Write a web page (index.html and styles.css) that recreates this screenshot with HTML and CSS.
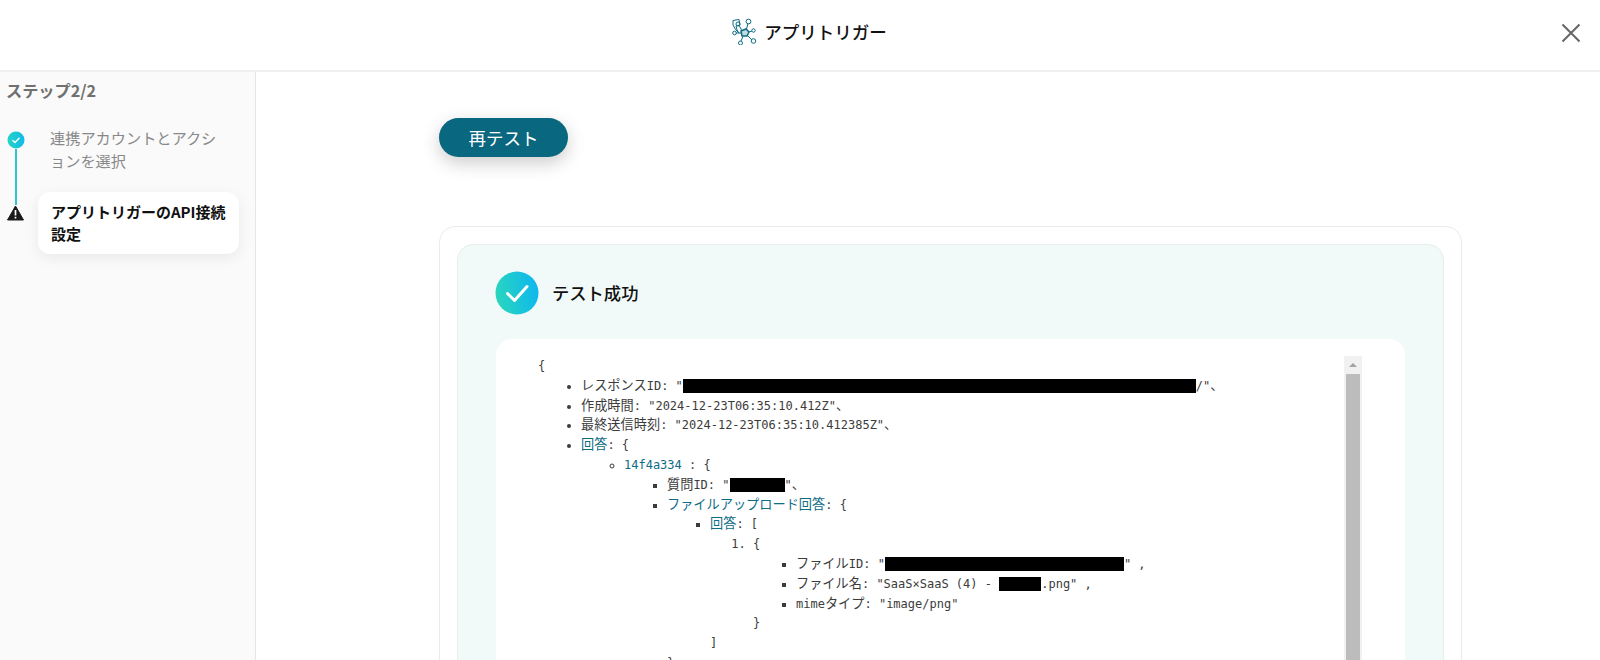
FILE: index.html
```html
<!DOCTYPE html>
<html lang="ja">
<head>
<meta charset="utf-8">
<title>アプリトリガー</title>
<link rel="stylesheet" href="styles.css">
</head>
<body>
<header class="topbar">
  <div class="title">
    <svg class="app-icon" width="26" height="28" viewBox="0 0 26 28" fill="none" stroke="#0f6c85" stroke-width="1">
      <path d="M2 3.5 L8 2.5 L9 8 L5 9 L6 13 L8 16 L4.5 12.5 L2 8Z"/>
      <path d="M10 14 L15 12 L18 15 L16 19 L11 19Z" fill="#0f6c85" fill-opacity=".25" stroke-width="1.5"/>
      <path d="M8 8 L11 14 M15.5 12 L17 6.5 M18 15 L21 14 M16.5 18.5 L21 23 M12 19.5 L10 24 M10.5 16 L5 16"/>
      <circle cx="7" cy="7" r="2"/>
      <circle cx="17.5" cy="4.5" r="2.4"/>
      <circle cx="22.5" cy="13.5" r="1.7"/>
      <circle cx="22.5" cy="24" r="2.3"/>
      <circle cx="9.5" cy="26" r="2"/>
      <circle cx="3.5" cy="16" r="1.8"/>
    </svg>
    <span>アプリトリガー</span>
  </div>
  <svg class="close" width="20" height="20" viewBox="0 0 20 20" stroke="#666" stroke-width="2" fill="none">
    <path d="M1.5 1.5 L18.5 18.5 M18.5 1.5 L1.5 18.5"/>
  </svg>
</header>
<div class="layout">
  <aside class="sidebar">
    <h2 class="step-title">ステップ2/2</h2>
    <ol class="steps">
      <li class="step step-done">
        <span class="step-mark">
          <svg class="done-icon" width="18" height="18" viewBox="0 0 18 18">
            <defs><linearGradient id="g1" x1="0" y1="0" x2="1" y2="0"><stop offset="0" stop-color="#27d3c3"/><stop offset="1" stop-color="#10bbe8"/></linearGradient></defs>
            <circle cx="9" cy="9" r="8.5" fill="url(#g1)"/>
            <path d="M5.5 9.2 L8 11.6 L12.5 6.8" fill="none" stroke="#fff" stroke-width="1.4"/>
          </svg>
          <span class="connector"></span>
        </span>
        <p class="step-text">連携アカウントとアクションを選択</p>
      </li>
      <li class="step step-current">
        <span class="step-mark">
          <svg width="17" height="16" viewBox="0 0 17 16">
            <path d="M8.5 1 L16.5 15 L0.5 15Z" fill="#1a1a1a" stroke="#1a1a1a" stroke-linejoin="round"/>
            <path d="M8.5 5 V10.5 M8.5 11.8 V13.4" stroke="#fff" stroke-width="1.7"/>
          </svg>
        </span>
        <p class="step-card">アプリトリガーのAPI接続設定</p>
      </li>
    </ol>
  </aside>
  <main class="main">
    <button class="retest" type="button">再テスト</button>
    <section class="outer-card">
      <div class="result">
        <div class="result-head">
          <svg width="44" height="44" viewBox="0 0 44 44">
            <defs><linearGradient id="g2" x1="0" y1="0.6" x2="1" y2="0.4"><stop offset="0" stop-color="#2ad6bd"/><stop offset="1" stop-color="#0db7ef"/></linearGradient></defs>
            <circle cx="22" cy="22" r="21.5" fill="url(#g2)"/>
            <path d="M12.5 22.5 L19.5 29.5 L32 15.5" fill="none" stroke="#fff" stroke-width="3" stroke-linecap="round" stroke-linejoin="round"/>
          </svg>
          <h3 class="result-title">テスト成功</h3>
        </div>
        <div class="json-box">
          <div class="fake-scroll"><span class="scroll-up"></span><span class="scroll-thumb"></span></div>
          <div class="json">
            <div>{</div>
            <ul>
              <li><span class="ja">レスポンス</span>ID: "<span class="mask m1"></span>/"<span class="ja">、</span></li>
              <li><span class="ja">作成時間</span>: "2024-12-23T06:35:10.412Z"<span class="ja">、</span></li>
              <li><span class="ja">最終送信時刻</span>: "2024-12-23T06:35:10.412385Z"<span class="ja">、</span></li>
              <li><span class="ja key">回答</span>: {
                <ul>
                  <li><span class="key">14f4a334</span> : {
                    <ul>
                      <li><span class="ja">質問</span>ID: "<span class="mask m2"></span>"<span class="ja">、</span></li>
                      <li><span class="ja key">ファイルアップロード回答</span>: {
                        <ul>
                          <li><span class="ja key">回答</span>: [
                            <ol>
                              <li>{
                                <ul>
                                  <li><span class="ja">ファイル</span>ID: "<span class="mask m3"></span>" ,</li>
                                  <li><span class="ja">ファイル名</span>: "SaaS×SaaS (4) - <span class="mask m4"></span>.png" ,</li>
                                  <li>mime<span class="ja">タイプ</span>: "image/png"</li>
                                </ul>
                                }
                              </li>
                            </ol>
                            ]
                          </li>
                        </ul>
                        }
                      </li>
                    </ul>
                    }
                  </li>
                </ul>
                }
              </li>
            </ul>
            <div>}</div>
          </div>
        </div>
      </div>
    </section>
  </main>
</div>
</body>
</html>
```
FILE: styles.css
```css
* { box-sizing: border-box; }
html, body { margin: 0; height: 660px; overflow: hidden; background: #fff; }
body { font-family: "Noto Sans CJK JP", "Noto Sans", sans-serif; color: #111; }

.topbar {
  height: 72px;
  display: flex;
  align-items: center;
  justify-content: center;
  padding: 0 0 8px 17px;
  border-bottom: 2px solid #f0f0f0;
  position: relative;
}
.title { display: flex; align-items: center; gap: 7px; font-size: 17.5px; font-weight: 500; }
.app-icon { margin-left: 1px; }
.close { position: absolute; right: 19px; top: 23px; }

.layout { display: flex; height: 588px; }
.sidebar {
  width: 256px;
  flex: none;
  background: #fafafa;
  border-right: 1px solid #e6e6e6;
  padding: 6px 0 0 6px;
}
.step-title { margin: 0; font-size: 16.2px; font-weight: 700; line-height: 24px; color: #707070; }
.steps { list-style: none; margin: 29px 0 0 1px; padding: 0; }
.step { display: flex; }
.step-mark { width: 31px; flex: none; display: flex; flex-direction: column; align-items: flex-start; }
.step-done { height: 74px; }
.done-icon { flex: none; }
.connector { width: 2px; flex: 1; margin-left: 8px; background: #2cc6cc; }
.step-text { margin: -5px 0 0 12px; width: 172px; font-size: 15.2px; line-height: 23px; color: #888; font-weight: 400; }
.step-card {
  margin: -13px 0 0 0;
  width: 201px;
  height: 62px;
  padding: 9px 8px 0 13px;
  border-radius: 12px;
  background: #fff;
  box-shadow: 0 4px 14px rgba(0, 0, 0, .07);
  font-size: 15px;
  font-weight: 700;
  line-height: 22px;
}

.main { flex: 1; padding: 46px 0 0 182px; overflow: hidden; }
.retest {
  display: block;
  width: 129px;
  height: 39px;
  margin-left: 1px;
  padding: 0;
  border: 0;
  border-radius: 20px;
  background: #0a6780;
  color: #fff;
  font-family: inherit;
  font-size: 17.5px;
  box-shadow: 0 6px 18px rgba(0, 0, 0, .2);
}
.outer-card {
  margin: 69px 0 0 1px;
  width: 1023px;
  padding: 17px;
  border: 1px solid #e9ecec;
  border-radius: 16px;
  background: #fff;
}
.result {
  padding: 26px 38px 0;
  border: 1px solid #e6eeee;
  border-radius: 16px;
  background: #f2faf9;
}
.result-head { display: flex; align-items: center; gap: 13px; height: 44px; margin-left: -1px; }
.result-title { margin: 0 0 2px; font-size: 17.3px; font-weight: 500; color: #111; }

.json-box {
  position: relative;
  margin-top: 24px;
  height: 480px;
  padding: 18px 0 0 42px;
  border-radius: 16px 16px 0 0;
  background: #fff;
  overflow: hidden;
}
.fake-scroll {
  position: absolute;
  left: 848px;
  top: 17px;
  bottom: 0;
  width: 18px;
  background: #f1f1f1;
}
.scroll-up {
  position: absolute;
  left: 5px;
  top: 7px;
  border-left: 4px solid transparent;
  border-right: 4px solid transparent;
  border-bottom: 4px solid #a3a3a3;
}
.scroll-thumb {
  position: absolute;
  left: 2px;
  right: 2px;
  top: 18px;
  bottom: 0;
  background: #bcbcbc;
}
.json {
  font-family: "DejaVu Sans Mono", "Liberation Mono", monospace;
  font-size: 12px;
  line-height: 19.8px;
  color: #3c3c3c;
}
.json ul, .json ol { margin: 0; padding-left: 43px; }
.ja { font-family: "Noto Sans CJK JP", sans-serif; font-size: 13.2px; line-height: 1; }
.key { color: #0f6c85; }
.mask { display: inline-block; height: 14px; background: #000; vertical-align: -3px; }
.m1 { width: 513px; }
.m2 { width: 55px; }
.m3 { width: 239px; }
.m4 { width: 42px; }
```
